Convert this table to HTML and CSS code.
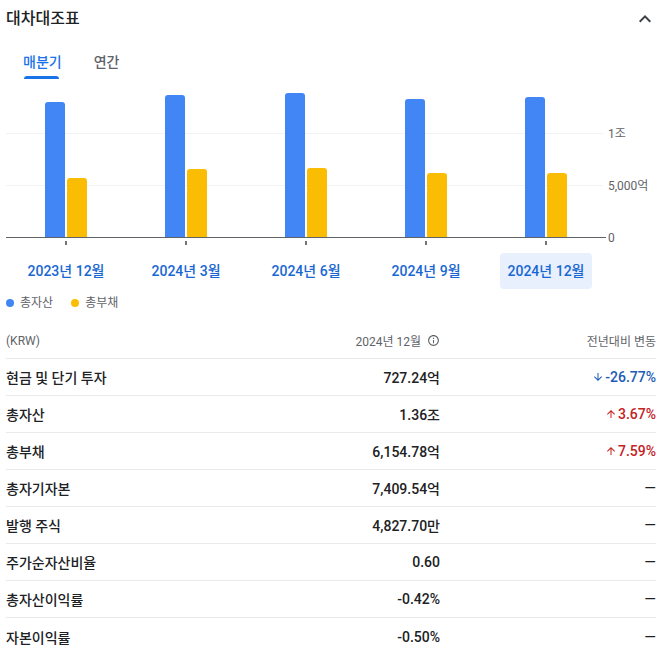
FILE: index.html
```html
<!DOCTYPE html>
<html lang="ko">
<head>
<meta charset="utf-8">
<title>대차대조표</title>
<link rel="stylesheet" href="styles.css">
</head>
<body>
<div class="card">
  <div class="head">
    <div class="title">대차대조표</div>
    <svg class="chev" viewBox="0 0 24 24" width="24" height="24"><path d="M12 8l-6 6 1.41 1.41L12 10.83l4.59 4.58L18 14z" fill="#3c4043"/></svg>
  </div>

  <div class="tabs">
    <div class="tab active"><span>매분기</span><i class="bar-ul"></i></div>
    <div class="tab"><span>연간</span></div>
  </div>

  <div class="chart">
    <div class="plot">
      <div class="group"><div class="b blue" style="height:135px"></div><div class="b yellow" style="height:59px"></div></div>
      <div class="group"><div class="b blue" style="height:142px"></div><div class="b yellow" style="height:68px"></div></div>
      <div class="group"><div class="b blue" style="height:144px"></div><div class="b yellow" style="height:69px"></div></div>
      <div class="group"><div class="b blue" style="height:138px"></div><div class="b yellow" style="height:64px"></div></div>
      <div class="group"><div class="b blue" style="height:140px"></div><div class="b yellow" style="height:64px"></div></div>
    </div>
    <div class="yaxis">
      <div class="yl">1조</div>
      <div class="yl">5,000억</div>
      <div class="yl">0</div>
    </div>
  </div>

  <div class="xaxis">
    <div class="xcell"><i class="tick"></i><div class="xl">2023년 12월</div></div>
    <div class="xcell"><i class="tick"></i><div class="xl">2024년 3월</div></div>
    <div class="xcell"><i class="tick"></i><div class="xl">2024년 6월</div></div>
    <div class="xcell"><i class="tick"></i><div class="xl">2024년 9월</div></div>
    <div class="xcell"><i class="tick"></i><div class="xl sel">2024년 12월</div></div>
  </div>

  <div class="legend">
    <div class="li"><i class="dot blue"></i>총자산</div>
    <div class="li"><i class="dot yellow"></i>총부채</div>
  </div>

  <div class="table">
    <div class="row hdr">
      <div class="c1">(KRW)</div>
      <div class="c2">2024년 12월 <svg class="info" viewBox="0 0 24 24" width="13" height="13"><path d="M11 7h2v2h-2zm0 4h2v6h-2zm1-9C6.48 2 2 6.48 2 12s4.480 10 10 10 10-4.48 10-10S17.52 2 12 2zm0 18c-4.41 0-8-3.59-8-8s3.59-8 8-8 8 3.59 8 8-3.59 8-8 8z" fill="#5f6368"/></svg></div>
      <div class="c3">전년대비 변동</div>
    </div>
    <div class="row">
      <div class="c1">현금 및 단기 투자</div>
      <div class="c2">727.24억</div>
      <div class="c3 down"><svg class="arr" viewBox="0 0 24 24" width="12" height="12"><path d="M20 12l-1.41-1.41L13 16.17V4h-2v12.17l-5.58-5.59L4 12l8 8 8-8z"/></svg>-26.77%</div>
    </div>
    <div class="row">
      <div class="c1">총자산</div>
      <div class="c2">1.36조</div>
      <div class="c3 up"><svg class="arr" viewBox="0 0 24 24" width="12" height="12"><path d="M4 12l1.41 1.41L11 7.83V20h2V7.830l5.58 5.59L20 12l-8-8-8 8z"/></svg>3.67%</div>
    </div>
    <div class="row">
      <div class="c1">총부채</div>
      <div class="c2">6,154.78억</div>
      <div class="c3 up"><svg class="arr" viewBox="0 0 24 24" width="12" height="12"><path d="M4 12l1.41 1.41L11 7.83V20h2V7.83l5.58 5.59L20 12l-8-8-8 8z"/></svg>7.59%</div>
    </div>
    <div class="row">
      <div class="c1">총자기자본</div>
      <div class="c2">7,409.54억</div>
      <div class="c3 dash">—</div>
    </div>
    <div class="row">
      <div class="c1">발행 주식</div>
      <div class="c2">4,827.70만</div>
      <div class="c3 dash">—</div>
    </div>
    <div class="row">
      <div class="c1">주가순자산비율</div>
      <div class="c2">0.60</div>
      <div class="c3 dash">—</div>
    </div>
    <div class="row">
      <div class="c1">총자산이익률</div>
      <div class="c2">-0.42%</div>
      <div class="c3 dash">—</div>
    </div>
    <div class="row last">
      <div class="c1">자본이익률</div>
      <div class="c2">-0.50%</div>
      <div class="c3 dash">—</div>
    </div>
  </div>
</div>
</body>
</html>
```
FILE: styles.css
```css
* { box-sizing: border-box; }
html, body { margin: 0; padding: 0; background: #fff; }
body {
  font-family: Roboto, "Noto Sans CJK KR", sans-serif;
  color: #202124;
  width: 666px;
  overflow: hidden;
}
.card { padding: 0 10px 0 6px; }

.head {
  height: 34px;
  display: flex;
  align-items: center;
  justify-content: space-between;
}
.title { font-size: 16px; font-weight: 500; color: #202124; }
.chev { margin-top: 4px; margin-right: -1px; }

.tabs {
  display: flex;
  gap: 32px;
  padding-left: 17px;
  margin-top: 18px;
  height: 27px;
}
.tab {
  display: flex;
  flex-direction: column;
  font-size: 14px;
  line-height: 20px;
  font-weight: 500;
  color: #5f6368;
}
.tab.active { color: #1a73e8; }
.bar-ul {
  display: block;
  width: 35px;
  height: 3px;
  margin: 4px 0 0 1px;
  background: #1a73e8;
  border-radius: 3px 3px 0 0;
}

.chart {
  display: flex;
  align-items: flex-start;
  height: 153px;
  margin-top: 6px;
}
.plot {
  width: 600px;
  height: 153px;
  display: flex;
  align-items: flex-end;
  border-bottom: 1px solid #5f6368;
  background-image: linear-gradient(#f1f3f4, #f1f3f4), linear-gradient(#f1f3f4, #f1f3f4);
  background-size: 597px 1px, 597px 1px;
  background-position: 0 48px, 0 100px;
  background-repeat: no-repeat;
}
.group {
  width: 120px;
  display: flex;
  justify-content: center;
  align-items: flex-end;
  gap: 2px;
}
.b { width: 20px; border-radius: 3px 3px 0 0; }
.blue { background: #4285f4; }
.yellow { background: #fbbc04; }

.yaxis {
  margin-top: 23px;
  margin-left: 2px;
  display: flex;
  flex-direction: column;
}
.yl {
  height: 52px;
  line-height: 52px;
  font-size: 12px;
  color: #5f6368;
  white-space: nowrap;
}

.xaxis { display: flex; width: 600px; }
.xcell {
  width: 120px;
  display: flex;
  flex-direction: column;
  align-items: center;
}
.tick {
  display: block;
  width: 2px;
  height: 4px;
  margin-top: 3px;
  background: #70757a;
}
.xl {
  margin-top: 8px;
  height: 36px;
  line-height: 36px;
  padding: 0 8px;
  border-radius: 4px;
  font-size: 14px;
  font-weight: 500;
  color: #1967d2;
  white-space: nowrap;
}
.xl.sel { background: #e8f0fe; }

.legend {
  display: flex;
  gap: 18px;
  margin-top: 6px;
  height: 16px;
  line-height: 16px;
  font-size: 12px;
  color: #5f6368;
}
.li { display: flex; align-items: center; gap: 6px; }
.dot { display: block; width: 8px; height: 8px; border-radius: 50%; }

.table { margin-top: 12px; }
.row {
  display: grid;
  grid-template-columns: 1fr 200px 216px;
  align-items: center;
  height: 37px;
  border-bottom: 1px solid #e8eaed;
  font-size: 14px;
  font-weight: 500;
  color: #202124;
}
.row.hdr {
  height: 36px;
  font-size: 12px;
  font-weight: 400;
  color: #5f6368;
}
.row.last { border-bottom: none; }
.c2, .c3 {
  text-align: right;
  display: flex;
  justify-content: flex-end;
  align-items: center;
  white-space: nowrap;
}
.info { margin-left: 6px; }
.arr { margin-right: 1px; fill: currentColor; }
.down { color: #1a5bb5; }
.up { color: #c5221f; }
.dash { font-size: 15px; font-weight: 400; }
```
